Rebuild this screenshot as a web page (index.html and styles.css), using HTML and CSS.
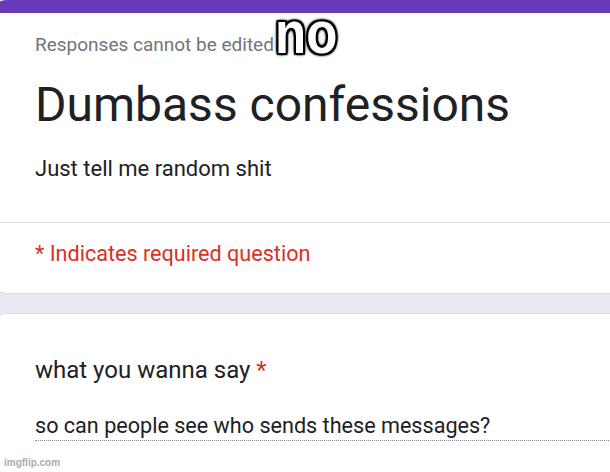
FILE: index.html
```html
<!DOCTYPE html>
<html lang="en">
<head>
<meta charset="utf-8">
<title>Dumbass confessions</title>
<link rel="stylesheet" href="styles.css">
</head>
<body>
<main class="page">
  <section class="card card-head">
    <div class="head-main">
      <p class="notice">Responses cannot be edited</p>
      <h1 class="title">Dumbass confessions</h1>
      <p class="desc">Just tell me random shit</p>
    </div>
    <div class="head-req">* Indicates required question</div>
  </section>
  <section class="card card-q">
    <div class="q-title">what you wanna say <span class="req">*</span></div>
    <div class="q-answer">so can people see who sends these messages?</div>
  </section>
</main>
<div class="meme">no</div>
<div class="watermark">imgflip.com</div>
</body>
</html>
```
FILE: styles.css
```css
html, body {
  margin: 0;
  padding: 0;
}
body {
  width: 610px;
  height: 472px;
  overflow: hidden;
  background: #ece9f6;
  font-family: Roboto, "Liberation Sans", Arial, sans-serif;
  color: #202124;
  position: relative;
}
.page {
  margin-left: -6px;
  width: 640px;
  display: flex;
  flex-direction: column;
  gap: 19px;
}
.card {
  background: #fff;
  border: 1px solid #dadce0;
  border-radius: 12px;
}
.card-head {
  border-top: 13px solid #673ab7;
}
.head-main {
  padding: 20px 0 39px 40px;
}
.notice {
  margin: 0;
  font-size: 19px;
  line-height: 24px;
  color: #70757a;
}
.title {
  margin: 20px 0 0;
  font-size: 48px;
  line-height: 56px;
  font-weight: 400;
  color: #202124;
}
.desc {
  margin: 22px 0 0;
  font-size: 22px;
  line-height: 28px;
  color: #202124;
}
.head-req {
  border-top: 1px solid #dadce0;
  padding: 17px 0 25px 40px;
  font-size: 21.6px;
  line-height: 28px;
  color: #d93025;
}
.card-q {
  padding: 41px 0 40px 40px;
}
.q-title {
  font-size: 24px;
  line-height: 30px;
  color: #202124;
}
.req {
  color: #d93025;
}
.q-answer {
  margin-top: 27px;
  font-size: 21.6px;
  line-height: 28px;
  color: #202124;
  border-bottom: 1px dotted #8a8d91;
}
.meme {
  position: absolute;
  left: 275px;
  top: 10px;
  font-family: "Liberation Sans", Arial, sans-serif;
  font-weight: 700;
  font-size: 51px;
  line-height: 51px;
  color: #fff;
  transform: scaleY(1.17);
  transform-origin: 0 43px;
  text-shadow:
    2px 0 1px #000, -2px 0 1px #000, 0 2px 1px #000, 0 -2px 1px #000,
    2px 2px 1px #000, -2px -2px 1px #000, 2px -2px 1px #000, -2px 2px 1px #000,
    0 0 4px #000, 0 0 5px rgba(0, 0, 0, 0.6);
}
.watermark {
  position: absolute;
  left: 4px;
  top: 457px;
  font-family: "Liberation Sans", Arial, sans-serif;
  font-weight: 700;
  font-size: 10px;
  line-height: 12px;
  color: #ababab;
}
```
